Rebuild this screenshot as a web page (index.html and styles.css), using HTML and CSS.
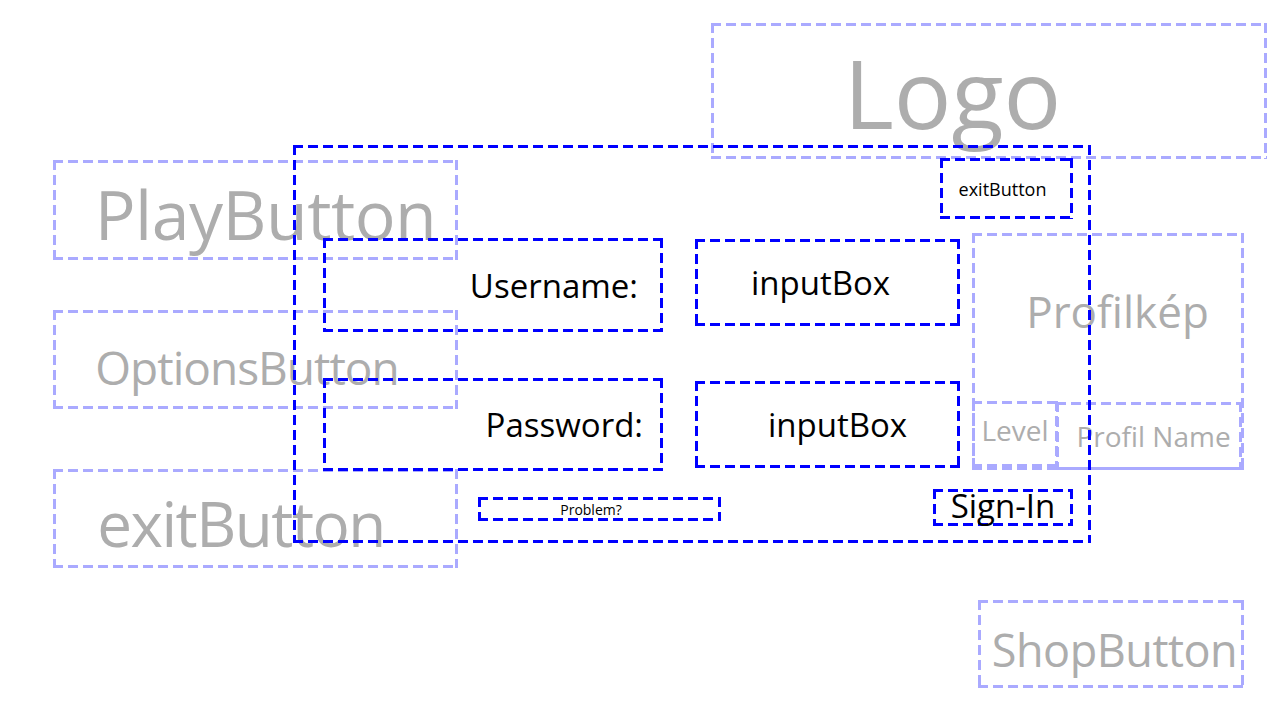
FILE: index.html
```html
<!DOCTYPE html>
<html lang="hu">
<head>
    <meta charset="UTF-8">
    <meta name="viewport" content="width=device-width, initial-scale=1.0">
    <title>Main Menu Wireframe</title>
    <link rel="stylesheet" href="styles.css">
</head>
<body>
    <div class="canvas">
        <!-- main menu (grey placeholders) -->
        <div class="box soft logo">Logo</div>
        <div class="box soft play-btn">PlayButton</div>
        <div class="box soft options-btn">OptionsButton</div>
        <div class="box soft exit-btn">exitButton</div>

        <div class="box soft profile-pic">Profilkép</div>
        <div class="box soft level">Level</div>
        <div class="box soft profile-name">Profil Name</div>

        <div class="box soft shop-btn">ShopButton</div>

        <!-- login popup -->
        <div class="box strong login">
            <div class="box strong login-exit">exitButton</div>
            <div class="box strong label user-label">Username:</div>
            <div class="box strong input user-input">inputBox</div>
            <div class="box strong label pass-label">Password:</div>
            <div class="box strong input pass-input">inputBox</div>
            <div class="box strong problem">Problem?</div>
            <div class="box strong sign-in">Sign-In</div>
        </div>
    </div>
</body>
</html>
```

FILE: styles.css
```css
body {
    margin: 0;
    padding: 0;
    background-color: #fff;
    font-family: "Open Sans", "Noto Sans", sans-serif;
}
.canvas {
    position: relative;
    width: 1280px;
    height: 720px;
    overflow: hidden;
}

/* dashed frame drawn with gradients so the dash length is fixed */
.box {
    --c: #00f;
    position: absolute;
    box-sizing: border-box;
    display: flex;
    align-items: center;
    justify-content: center;
    white-space: nowrap;
    line-height: normal;
    background:
        repeating-linear-gradient(90deg, var(--c) 0 10px, transparent 10px 15px) left top / 100% 3px no-repeat,
        repeating-linear-gradient(90deg, var(--c) 0 10px, transparent 10px 15px) left bottom / 100% 3px no-repeat,
        repeating-linear-gradient(180deg, var(--c) 0 10px, transparent 10px 15px) left top / 3px 100% no-repeat,
        repeating-linear-gradient(180deg, var(--c) 0 10px, transparent 10px 15px) right top / 3px 100% no-repeat;
}
.soft {
    --c: #aaaaff;
    color: #adadad;
}
.strong {
    --c: #0000ff;
    color: #000;
}

/* grey menu items */
.logo {
    left: 711px; top: 23px; width: 556px; height: 136px;
    font-size: 96px;
    padding-right: 73px;
}
.play-btn {
    left: 53px; top: 160px; width: 405px; height: 100px;
    font-size: 68px;
    letter-spacing: -0.5px;
    padding-left: 20px;
    padding-top: 7px;
}
.options-btn {
    left: 53px; top: 310px; width: 405px; height: 99px;
    font-size: 46px;
    letter-spacing: -1px;
    padding-right: 17px;
    padding-top: 14px;
}
.exit-btn {
    left: 53px; top: 469px; width: 405px; height: 99px;
    font-size: 62px;
    letter-spacing: -1.5px;
    padding-right: 29px;
    padding-top: 8px;
}
.profile-pic {
    left: 972px; top: 233px; width: 272px; height: 237px;
    font-size: 44px;
    align-items: flex-start;
    padding-left: 19px;
    padding-top: 48px;
}
.level {
    left: 972px; top: 401px; width: 86px; height: 66px;
    font-size: 28px;
    padding-bottom: 8px;
}
.profile-name {
    left: 1056px; top: 402px; width: 186px; height: 68px;
    font-size: 28px;
    padding-left: 9px;
}
.shop-btn {
    left: 978px; top: 600px; width: 266px; height: 88px;
    font-size: 45px;
    letter-spacing: -0.5px;
    padding-left: 7px;
    padding-top: 10px;
}

/* login popup */
.login {
    left: 293px; top: 145px; width: 798px; height: 398px;
}
.login-exit {
    left: 647px; top: 13px; width: 133px; height: 61px;
    font-size: 18px;
    padding-right: 8px;
}
.label {
    width: 340px;
    font-size: 33px;
    justify-content: flex-end;
}
.user-label {
    left: 30px; top: 93px; height: 94px;
    padding-right: 25px;
}
.pass-label {
    left: 30px; top: 233px; height: 93px;
    padding-right: 20px;
}
.input {
    left: 402px; width: 265px; height: 87px;
    font-size: 33px;
}
.user-input {
    top: 94px;
    padding-right: 14px;
}
.pass-input {
    top: 236px;
    padding-left: 20px;
}
.problem {
    left: 185px; top: 352px; width: 243px; height: 24px;
    font-size: 14px;
    padding-right: 17px;
}
.sign-in {
    left: 640px; top: 344px; width: 140px; height: 37px;
    font-size: 33px;
    padding-bottom: 5px;
}
```
